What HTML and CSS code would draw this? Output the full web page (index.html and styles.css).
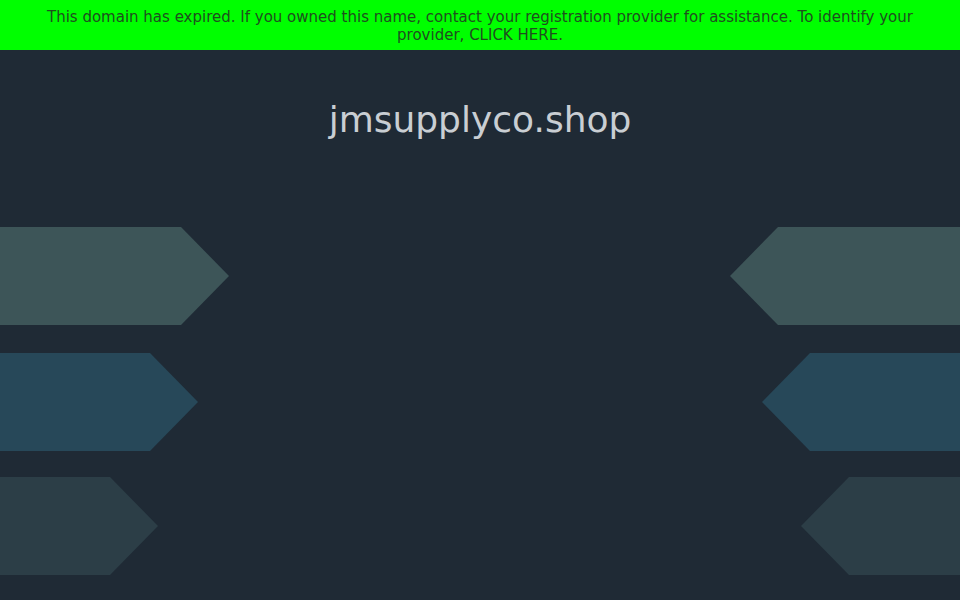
FILE: index.html
```html
<!DOCTYPE html>
<html lang="en">
<head>
<meta charset="utf-8">
<title>jmsupplyco.shop</title>
<link rel="stylesheet" href="styles.css">
</head>
<body>
<div class="banner">This domain has expired. If you owned this name, contact your registration provider for assistance. To identify your provider, <a class="banner-link" href="#">CLICK HERE</a>.</div>
<h1 class="title">jmsupplyco.shop</h1>
<div class="stage">
  <div class="column column-left">
    <div class="arrow arrow-right arrow-a w1"></div>
    <div class="arrow arrow-right arrow-b w2"></div>
    <div class="arrow arrow-right arrow-c w3"></div>
  </div>
  <div class="column column-right">
    <div class="arrow arrow-left arrow-a w1"></div>
    <div class="arrow arrow-left arrow-b w2"></div>
    <div class="arrow arrow-left arrow-c w3"></div>
  </div>
</div>
</body>
</html>
```
FILE: styles.css
```css
html, body {
  margin: 0;
  padding: 0;
  height: 100%;
  overflow: hidden;
}
body {
  background: #1f2a35;
  font-family: "DejaVu Sans", sans-serif;
}
.banner {
  background: #00ff00;
  color: #1f4f1f;
  font-size: 15px;
  line-height: 18px;
  text-align: center;
  padding: 8px 40px 6px;
  height: 36px;
}
.banner-link {
  color: inherit;
  text-decoration: none;
}
.title {
  margin: 49px 0 0;
  font-size: 36px;
  line-height: 42px;
  font-weight: normal;
  text-align: center;
  color: #c9ced3;
}
.stage {
  margin-top: 86px;
  display: flex;
  justify-content: space-between;
}
.column {
  display: flex;
  flex-direction: column;
}
.column-right {
  align-items: flex-end;
}
.arrow {
  height: 98px;
}
.arrow-b { margin-top: 28px; }
.arrow-c { margin-top: 26px; }
.arrow-a { background: #3d5558; }
.arrow-b { background: #274859; }
.arrow-c { background: #2c3e47; }
.column-left .w1 { width: 229px; }
.column-left .w2 { width: 198px; }
.column-left .w3 { width: 158px; }
.column-right .w1 { width: 230px; }
.column-right .w2 { width: 198px; }
.column-right .w3 { width: 159px; }
.arrow-right {
  clip-path: polygon(0 0, calc(100% - 48px) 0, 100% 50%, calc(100% - 48px) 100%, 0 100%);
}
.arrow-left {
  clip-path: polygon(48px 0, 100% 0, 100% 100%, 48px 100%, 0 50%);
}
```
